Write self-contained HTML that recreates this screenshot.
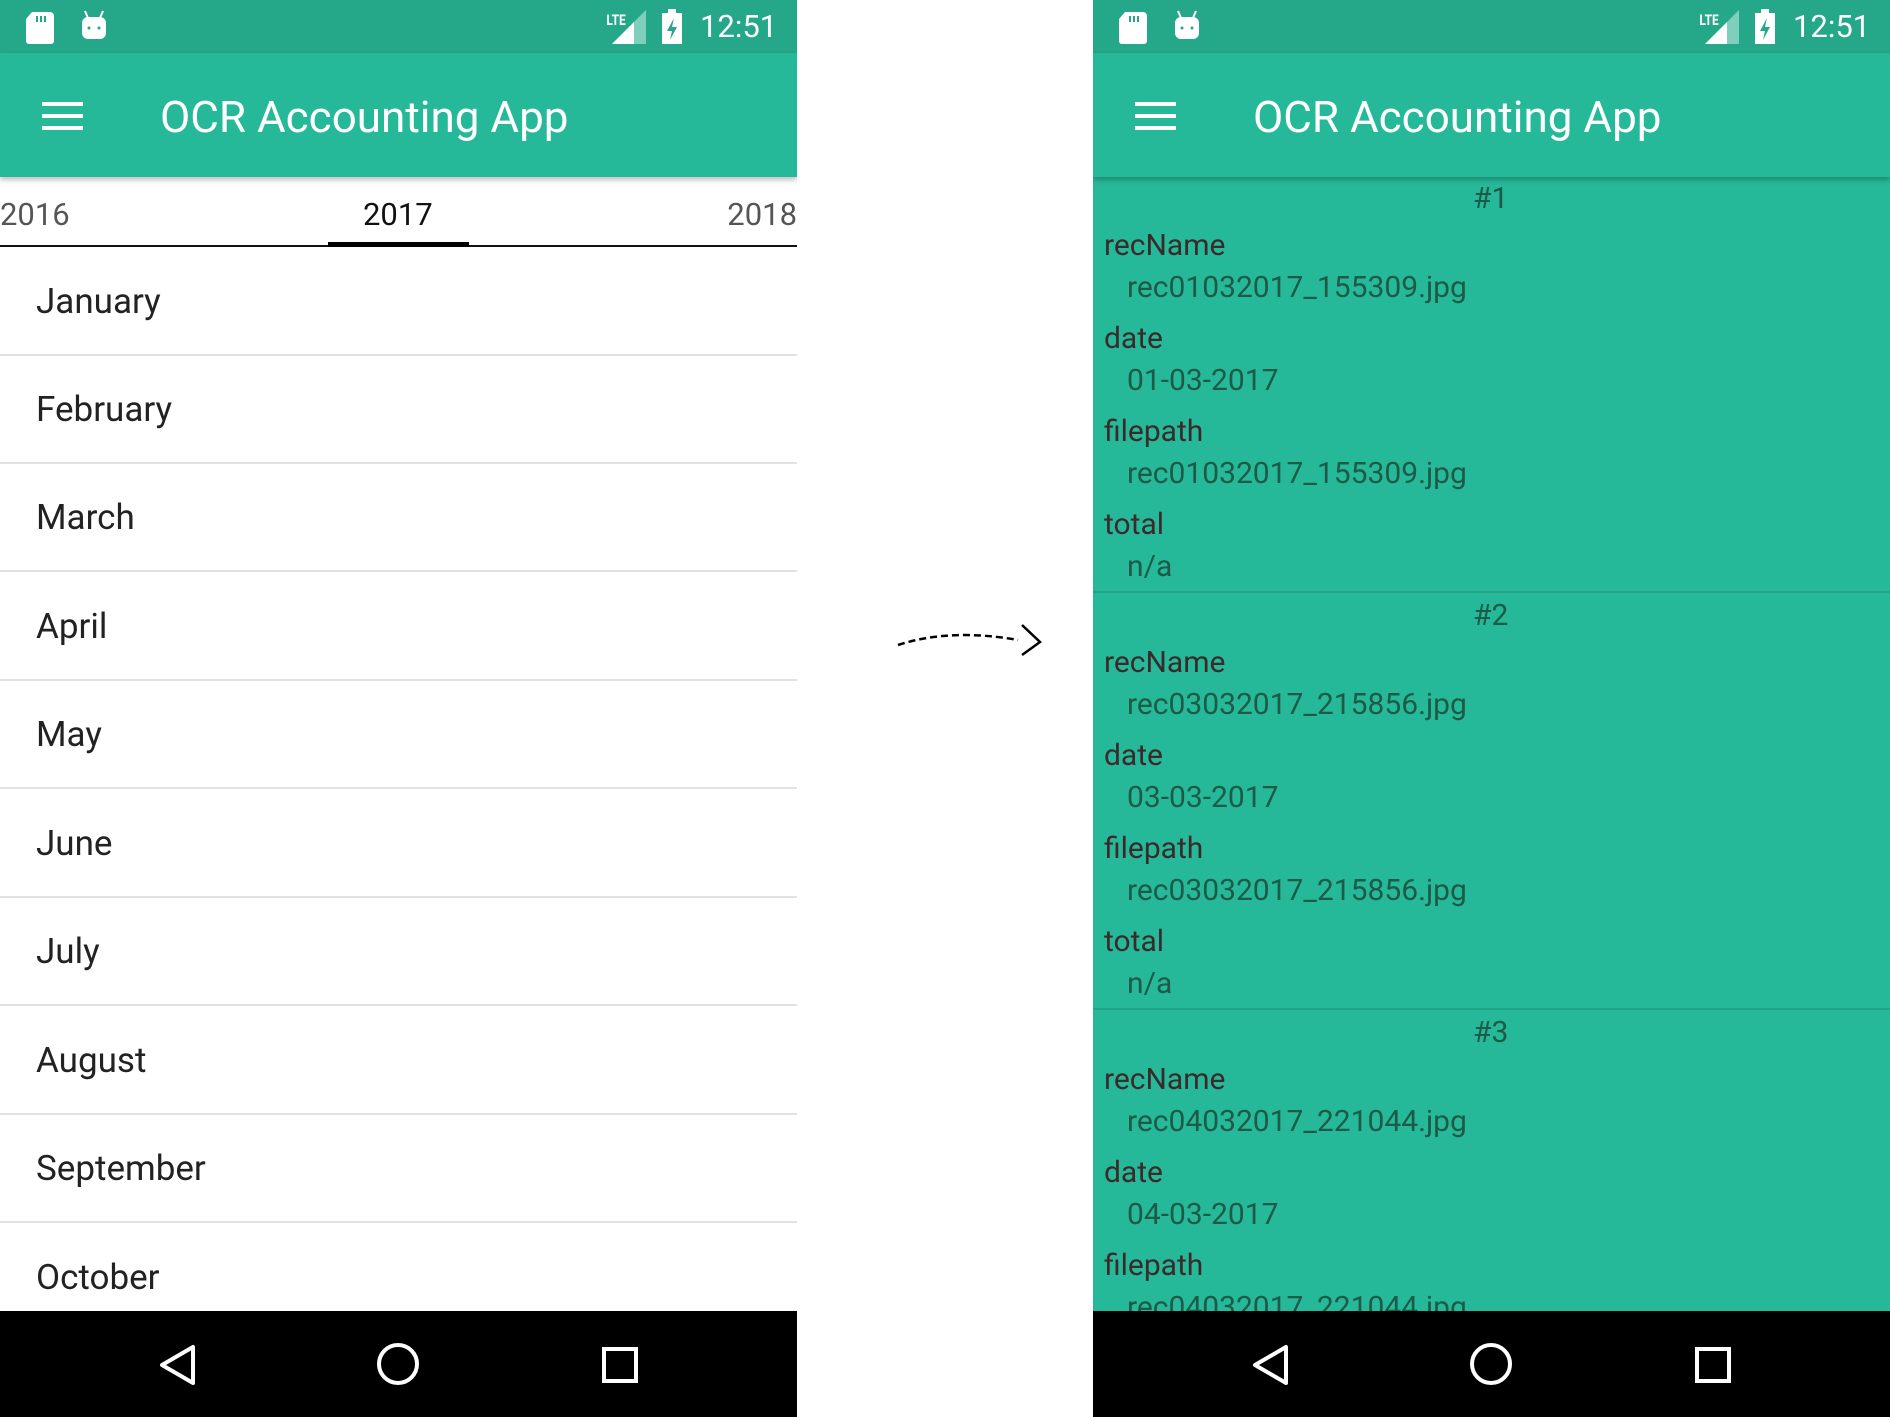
<!DOCTYPE html>
<html><head><meta charset="utf-8"><style>
*{margin:0;padding:0;box-sizing:border-box}
body{width:1890px;height:1417px;background:#fff;position:relative;overflow:hidden;font-family:"Roboto","Liberation Sans",sans-serif}
.ph{position:absolute;top:0;width:797px;height:1417px;overflow:hidden}
.sb{position:absolute;left:0;top:0;width:797px;height:53px;background:#25a78a}
.tb{position:absolute;left:0;top:53px;width:797px;height:124px;background:#26b999;box-shadow:0 3px 5px rgba(0,0,0,.25);z-index:2}
.t{position:absolute;height:50px;line-height:50px;white-space:nowrap}
.nav{position:absolute;left:0;top:1311px;width:797px;height:106px;background:#000}
.row{position:absolute;left:0;width:797px;height:108px;border-bottom:2px solid #e2e2e2}
.row span{position:absolute;left:36px;top:29px;font-size:35px;color:#222;line-height:50px}
.lab{color:#3b2a2c;font-size:30px}
.val{color:#1d5a47;font-size:30px}
</style></head><body>

<!-- LEFT PHONE -->
<div class="ph" style="left:0">
 <div class="sb">
  <svg style="position:absolute;left:26px;top:12px" width="30" height="32"><path d="M6 0h18a4 4 0 0 1 4 4v25a3 3 0 0 1-3 3H3a3 3 0 0 1-3-3V7z" fill="#fff"/><rect x="10" y="4" width="2" height="6" fill="#25a78a"/><rect x="14" y="4" width="2" height="6" fill="#25a78a"/><rect x="18" y="4" width="2" height="6" fill="#25a78a"/></svg>
  <svg style="position:absolute;left:80px;top:9px" width="28" height="32"><path d="M5 2l3 7M23 2l-3 7" stroke="#fff" stroke-width="2"/><rect x="2" y="8" width="24" height="22" rx="6" fill="#fff"/><circle cx="9" cy="19" r="1.5" fill="#25a78a"/><circle cx="19" cy="19" r="1.5" fill="#25a78a"/></svg>
  <div class="t" style="left:604px;top:0;font-size:15px;color:#fff;height:40px;line-height:40px;font-weight:bold;transform:scaleX(.8)">LTE</div>
  <svg style="position:absolute;left:612px;top:10px" width="34" height="34"><path d="M34 0V34H0z" fill="#7fcfbc"/><path d="M22 12V34H0z" fill="#fff"/></svg>
  <svg style="position:absolute;left:662px;top:9px" width="20" height="35"><rect x="0" y="4" width="20" height="31" fill="#fff"/><rect x="6" y="0" width="8" height="5" fill="#fff"/><path d="M12 9l-7 13h5l-2 9 7-13h-5z" fill="#25a78a"/></svg>
  <div class="t" style="left:700px;top:2px;font-size:31px;color:#fff">12:51</div>
 </div>
 <div class="tb">
  <div style="position:absolute;left:42px;top:49px;width:41px;height:4px;background:#fff"></div>
  <div style="position:absolute;left:42px;top:61px;width:41px;height:4px;background:#fff"></div>
  <div style="position:absolute;left:42px;top:73px;width:41px;height:4px;background:#fff"></div>
  <div class="t" style="left:160px;top:39px;font-size:44px;color:#fff">OCR Accounting App</div>
 </div>
 <div class="t" style="left:0;top:190px;font-size:31px;color:#555">2016</div>
 <div class="t" style="left:363px;top:190px;font-size:31px;color:#111">2017</div>
 <div class="t" style="right:0;top:190px;font-size:31px;color:#555">2018</div>
 <div style="position:absolute;left:0;top:245px;width:797px;height:2px;background:#111"></div>
 <div style="position:absolute;left:328px;top:242px;width:141px;height:5px;background:#000"></div>
 <div class="row" style="top:248px"><span>January</span></div>
 <div class="row" style="top:356px"><span>February</span></div>
 <div class="row" style="top:464px"><span>March</span></div>
 <div class="row" style="top:573px"><span>April</span></div>
 <div class="row" style="top:681px"><span>May</span></div>
 <div class="row" style="top:790px"><span>June</span></div>
 <div class="row" style="top:898px"><span>July</span></div>
 <div class="row" style="top:1007px"><span>August</span></div>
 <div class="row" style="top:1115px"><span>September</span></div>
 <div class="row" style="top:1224px"><span>October</span></div>
 <div class="nav">
  <svg style="position:absolute;left:157px;top:33px" width="40" height="42"><path d="M36 3V39L5 21z" fill="none" stroke="#fff" stroke-width="4" stroke-linejoin="round"/></svg>
  <svg style="position:absolute;left:376px;top:31px" width="44" height="44"><circle cx="22" cy="22" r="19" fill="none" stroke="#fff" stroke-width="4"/></svg>
  <svg style="position:absolute;left:601px;top:35px" width="38" height="38"><rect x="3" y="3" width="32" height="32" fill="none" stroke="#fff" stroke-width="4"/></svg>
 </div>
</div>

<!-- ARROW -->
<svg style="position:absolute;left:890px;top:620px" width="160" height="50"><path d="M8 25Q60 8 128 20" fill="none" stroke="#000" stroke-width="2.5" stroke-dasharray="7 4"/><path d="M132 5L150 22L132 35" fill="none" stroke="#000" stroke-width="2.5"/></svg>

<!-- RIGHT PHONE -->
<div class="ph" style="left:1093px;background:#26b999">
 <div class="sb">
  <svg style="position:absolute;left:26px;top:12px" width="30" height="32"><path d="M6 0h18a4 4 0 0 1 4 4v25a3 3 0 0 1-3 3H3a3 3 0 0 1-3-3V7z" fill="#fff"/><rect x="10" y="4" width="2" height="6" fill="#25a78a"/><rect x="14" y="4" width="2" height="6" fill="#25a78a"/><rect x="18" y="4" width="2" height="6" fill="#25a78a"/></svg>
  <svg style="position:absolute;left:80px;top:9px" width="28" height="32"><path d="M5 2l3 7M23 2l-3 7" stroke="#fff" stroke-width="2"/><rect x="2" y="8" width="24" height="22" rx="6" fill="#fff"/><circle cx="9" cy="19" r="1.5" fill="#25a78a"/><circle cx="19" cy="19" r="1.5" fill="#25a78a"/></svg>
  <div class="t" style="left:604px;top:0;font-size:15px;color:#fff;height:40px;line-height:40px;font-weight:bold;transform:scaleX(.8)">LTE</div>
  <svg style="position:absolute;left:612px;top:10px" width="34" height="34"><path d="M34 0V34H0z" fill="#7fcfbc"/><path d="M22 12V34H0z" fill="#fff"/></svg>
  <svg style="position:absolute;left:662px;top:9px" width="20" height="35"><rect x="0" y="4" width="20" height="31" fill="#fff"/><rect x="6" y="0" width="8" height="5" fill="#fff"/><path d="M12 9l-7 13h5l-2 9 7-13h-5z" fill="#25a78a"/></svg>
  <div class="t" style="left:700px;top:2px;font-size:31px;color:#fff">12:51</div>
 </div>
 <div class="tb">
  <div style="position:absolute;left:42px;top:49px;width:41px;height:4px;background:#fff"></div>
  <div style="position:absolute;left:42px;top:61px;width:41px;height:4px;background:#fff"></div>
  <div style="position:absolute;left:42px;top:73px;width:41px;height:4px;background:#fff"></div>
  <div class="t" style="left:160px;top:39px;font-size:44px;color:#fff">OCR Accounting App</div>
 </div>
 <!-- card 1 -->
 <div class="t val" style="left:380px;top:174px">#1</div>
 <div class="t lab" style="left:11px;top:221px">recName</div>
 <div class="t val" style="left:34px;top:263px">rec01032017_155309.jpg</div>
 <div class="t lab" style="left:11px;top:314px">date</div>
 <div class="t val" style="left:34px;top:356px">01-03-2017</div>
 <div class="t lab" style="left:11px;top:407px">filepath</div>
 <div class="t val" style="left:34px;top:449px">rec01032017_155309.jpg</div>
 <div class="t lab" style="left:11px;top:500px">total</div>
 <div class="t val" style="left:34px;top:542px">n/a</div>
 <div style="position:absolute;left:0;top:591px;width:797px;height:2px;background:#22a487"></div>
 <!-- card 2 -->
 <div class="t val" style="left:380px;top:591px">#2</div>
 <div class="t lab" style="left:11px;top:638px">recName</div>
 <div class="t val" style="left:34px;top:680px">rec03032017_215856.jpg</div>
 <div class="t lab" style="left:11px;top:731px">date</div>
 <div class="t val" style="left:34px;top:773px">03-03-2017</div>
 <div class="t lab" style="left:11px;top:824px">filepath</div>
 <div class="t val" style="left:34px;top:866px">rec03032017_215856.jpg</div>
 <div class="t lab" style="left:11px;top:917px">total</div>
 <div class="t val" style="left:34px;top:959px">n/a</div>
 <div style="position:absolute;left:0;top:1008px;width:797px;height:2px;background:#22a487"></div>
 <!-- card 3 -->
 <div class="t val" style="left:380px;top:1008px">#3</div>
 <div class="t lab" style="left:11px;top:1055px">recName</div>
 <div class="t val" style="left:34px;top:1097px">rec04032017_221044.jpg</div>
 <div class="t lab" style="left:11px;top:1148px">date</div>
 <div class="t val" style="left:34px;top:1190px">04-03-2017</div>
 <div class="t lab" style="left:11px;top:1241px">filepath</div>
 <div class="t val" style="left:34px;top:1283px">rec04032017_221044.jpg</div>
 <div class="nav">
  <svg style="position:absolute;left:157px;top:33px" width="40" height="42"><path d="M36 3V39L5 21z" fill="none" stroke="#fff" stroke-width="4" stroke-linejoin="round"/></svg>
  <svg style="position:absolute;left:376px;top:31px" width="44" height="44"><circle cx="22" cy="22" r="19" fill="none" stroke="#fff" stroke-width="4"/></svg>
  <svg style="position:absolute;left:601px;top:35px" width="38" height="38"><rect x="3" y="3" width="32" height="32" fill="none" stroke="#fff" stroke-width="4"/></svg>
 </div>
</div>
</body></html>
